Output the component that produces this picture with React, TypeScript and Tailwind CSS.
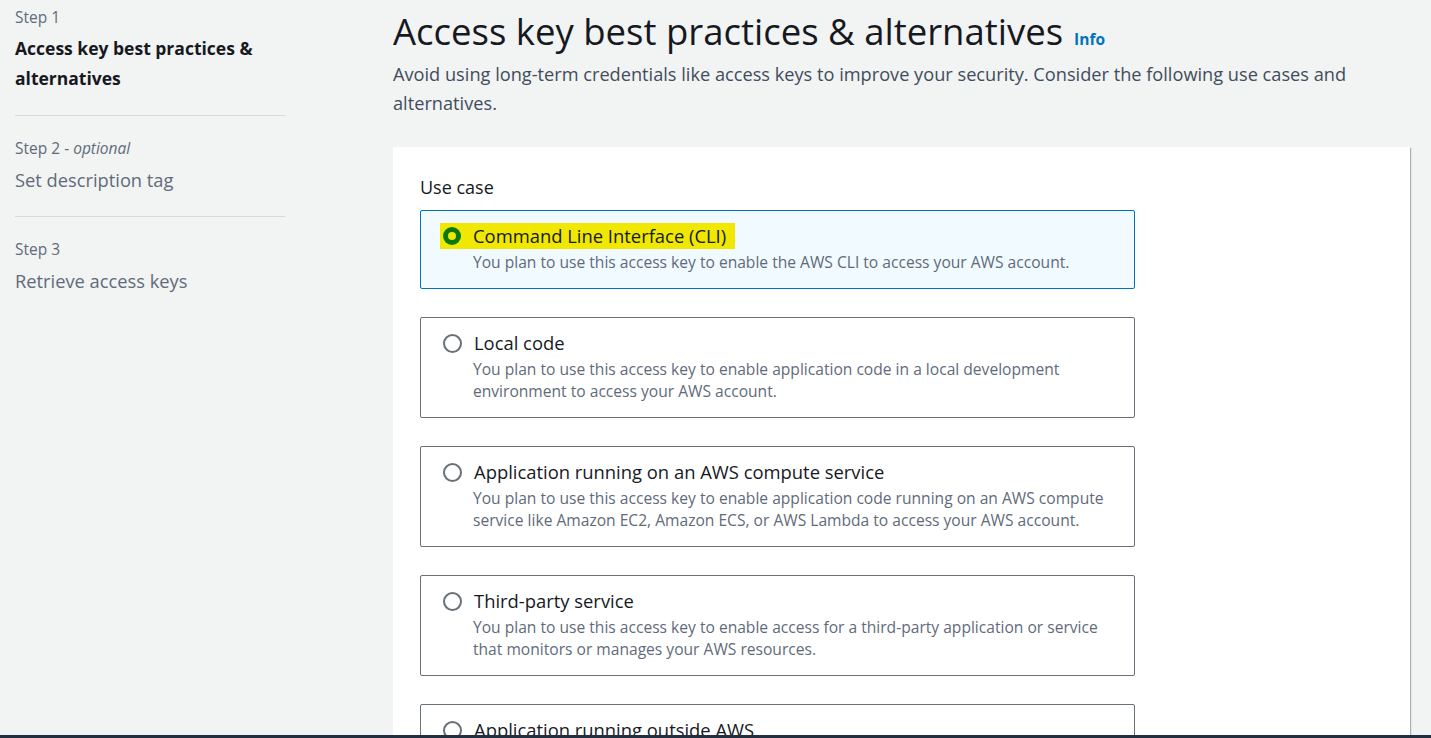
const steps = [
  { step: 'Step 1', title: 'Access key best practices & alternatives', active: true },
  { step: 'Step 2', optional: true, title: 'Set description tag' },
  { step: 'Step 3', title: 'Retrieve access keys' },
];

const useCases = [
  {
    title: 'Command Line Interface (CLI)',
    desc: 'You plan to use this access key to enable the AWS CLI to access your AWS account.',
    selected: true,
  },
  {
    title: 'Local code',
    desc: 'You plan to use this access key to enable application code in a local development environment to access your AWS account.',
  },
  {
    title: 'Application running on an AWS compute service',
    desc: 'You plan to use this access key to enable application code running on an AWS compute service like Amazon EC2, Amazon ECS, or AWS Lambda to access your AWS account.',
  },
  {
    title: 'Third-party service',
    desc: 'You plan to use this access key to enable access for a third-party application or service that monitors or manages your AWS resources.',
  },
  {
    title: 'Application running outside AWS',
    desc: 'You plan to use this access key to authenticate workloads running in your data center or other infrastructure outside of AWS.',
  },
];

export default function App() {
  return (
    <div
      className="relative h-[738px] overflow-hidden bg-[#f2f3f3] text-[#000716]"
      style={{ fontFamily: '"Open Sans", "Noto Sans", sans-serif' }}
    >
      <div className="flex">
        <nav className="w-[285px] shrink-0 pl-[15px]">
          {steps.map((s, i) => (
            <div key={s.step} className={i > 0 ? 'border-t border-[#d5dbdb] pt-[21px] pb-[21px]' : 'pt-[6px] pb-[22px]'}>
              <div className="text-[15.5px] leading-[22px] text-[#5f6b7a]">
                {s.step}
                {s.optional && (
                  <>
                    {' - '}
                    <i>optional</i>
                  </>
                )}
              </div>
              <div
                className={
                  s.active
                    ? 'mt-[5px] text-[17.5px] font-bold leading-[30px] text-[#16191f]'
                    : 'mt-[6px] text-[18.3px] leading-[30px] text-[#5f6b7a]'
                }
              >
                {s.title}
              </div>
            </div>
          ))}
        </nav>

        <main className="ml-[108px] flex-1 pr-[21px]">
          <header className="pt-[8px]">
            <div className="flex items-baseline gap-[11px]">
              <h1 className="text-[36.5px] leading-[46px] font-normal text-[#16191f]">
                Access key best practices &amp; alternatives
              </h1>
              <a className="text-[15.5px] font-bold text-[#0073bb]">Info</a>
            </div>
            <p className="mt-[6px] text-[18.2px] leading-[29px] text-[#414d5c]">
              Avoid using long-term credentials like access keys to improve your security. Consider the following use
              cases and alternatives.
            </p>
          </header>

          <section className="mt-[29px] bg-white px-[27px] pt-[28px] pb-[40px] shadow-[1px_1px_1px_0_rgba(0,28,36,0.3)]">
            <div className="text-[18px] leading-[24px] text-[#16191f]">Use case</div>
            <div className="mt-[11px] flex w-[715px] flex-col gap-[28px]">
              {useCases.map((u) => (
                <label
                  key={u.title}
                  className={
                    u.selected
                      ? 'block rounded-[2px] border border-[#0073bb] bg-[#f1faff] pt-[12px] pr-[18px] pb-[15px] pl-[22px]'
                      : 'block rounded-[2px] border border-[#687078] bg-white pt-[12px] pr-[18px] pb-[15px] pl-[22px]'
                  }
                >
                  <div
                    className={
                      u.selected
                        ? '-ml-[3px] flex h-[26px] w-fit items-center gap-[12px] bg-[#f0e800] pr-[9px] pl-[3px]'
                        : 'flex h-[26px] items-center gap-[12px]'
                    }
                  >
                    {u.selected ? (
                      <span className="flex h-[18px] w-[18px] shrink-0 items-center justify-center rounded-full bg-[#0a780c]">
                        <span className="h-[8px] w-[8px] rounded-full bg-[#f0e800]" />
                      </span>
                    ) : (
                      <span className="h-[19px] w-[19px] shrink-0 rounded-full border-2 border-[#687078]" />
                    )}
                    <span className="text-[18.4px] leading-[26px] text-[#16191f]">{u.title}</span>
                  </div>
                  <div className="mt-[2px] pl-[30px] text-[15.6px] leading-[22px] text-[#5f6b7a]">{u.desc}</div>
                </label>
              ))}
            </div>
          </section>
        </main>
      </div>
      <div className="absolute bottom-0 left-0 h-[3px] w-full bg-[#232f3e]" />
    </div>
  );
}
